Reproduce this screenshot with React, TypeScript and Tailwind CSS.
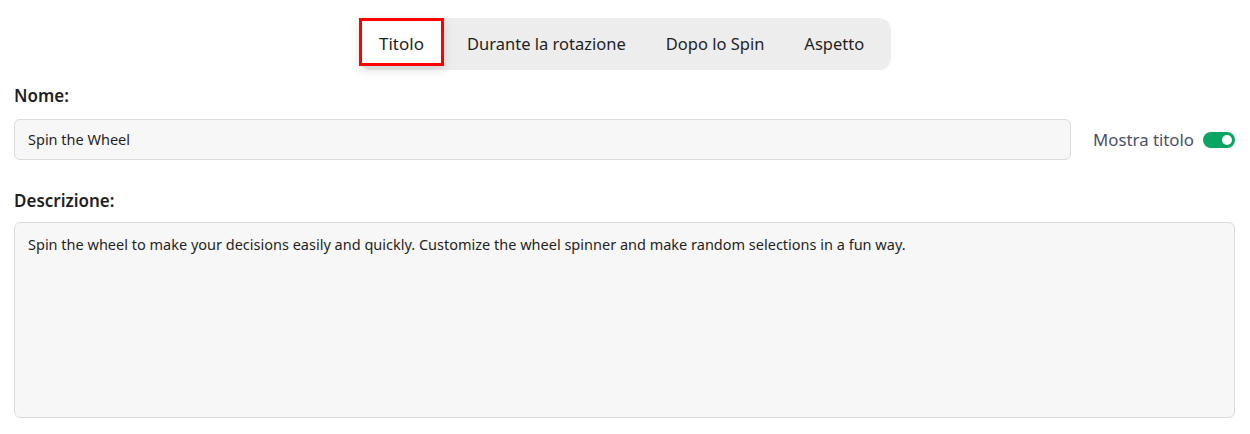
import React from "react";

export default function App() {
  const tabs = ["Durante la rotazione", "Dopo lo Spin", "Aspetto"];
  return (
    <div
      className="w-[1250px] h-[434px] bg-white pl-[14px] pr-[15px] text-[#1f1f1f]"
      style={{ fontFamily: '"Noto Sans", "Open Sans", sans-serif' }}
    >
      <div className="flex justify-center pt-[18px] pl-[1px]">
        <div className="flex h-[52px] w-[532px] items-start rounded-[12px] bg-[#ededed]">
          <div className="flex h-[48px] w-[85px] items-center justify-center border-[3px] border-[#ff0000] bg-white pt-[4px] text-[17px] shadow-[0_4px_10px_rgba(0,0,0,0.12)]">
            Titolo
          </div>
          {tabs.map((t) => (
            <div key={t} className="flex h-[48px] items-center whitespace-nowrap pl-[23px] pr-[17px] pt-[4px] text-[16.5px]">
              {t}
            </div>
          ))}
        </div>
      </div>

      <div className="mt-[14px] text-[17px] font-semibold leading-[24px]">Nome:</div>
      <div className="mt-[11px] flex items-center">
        <div className="flex h-[41px] flex-1 items-center rounded-[6px] border border-[#d8dbe0] bg-[#f7f7f7] px-[13px] text-[14.5px]">
          Spin the Wheel
        </div>
        <div className="ml-[22px] flex items-center">
          <span className="text-[16.8px] text-[#4a5068]">Mostra titolo</span>
          <div className="ml-[9px] flex h-[16px] w-[32px] items-center justify-end rounded-full bg-[#0aa562] pr-[3px]">
            <div className="h-[10px] w-[10px] rounded-full bg-white" />
          </div>
        </div>
      </div>

      <div className="mt-[29px] text-[17px] font-semibold leading-[24px]">Descrizione:</div>
      <div className="mt-[9px] h-[196px] rounded-[6px] border border-[#d8dbe0] bg-[#f7f7f7] px-[13px] pt-[10px] text-[14.5px] leading-[22px]">
        Spin the wheel to make your decisions easily and quickly. Customize the wheel spinner and make random selections in a fun way.
      </div>
    </div>
  );
}
